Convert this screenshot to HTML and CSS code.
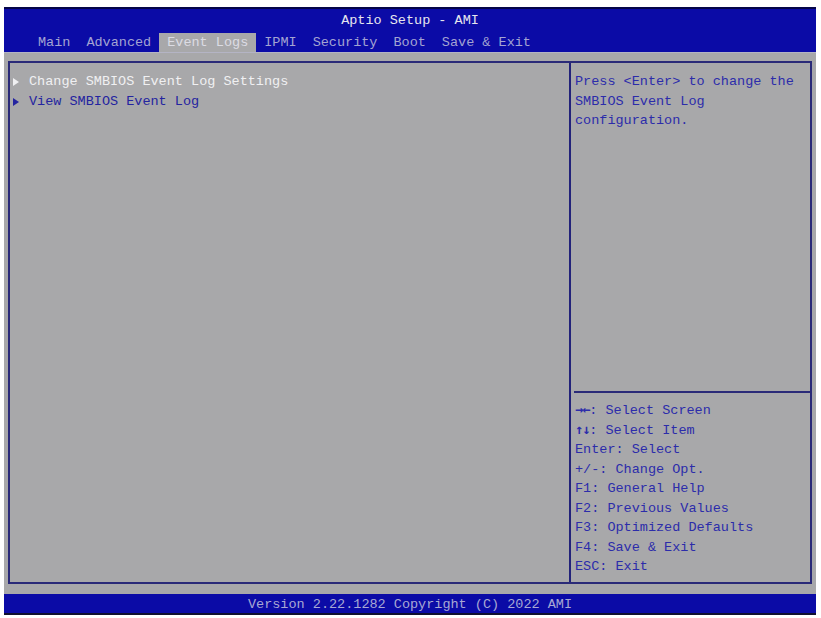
FILE: index.html
```html
<!DOCTYPE html>
<html lang="en">
<head>
    <meta charset="UTF-8">
    <meta name="viewport" content="width=device-width, initial-scale=1.0">
    <title>Aptio Setup - AMI</title>
    <link rel="stylesheet" href="styles.css">
</head>
<body>
    <div class="screen">
        <!-- Title and tab bar -->
        <div class="header">
            <div class="title">Aptio Setup - AMI</div>
            <div class="tabs">
                <span class="tab">Main</span>
                <span class="tab">Advanced</span>
                <span class="tab active">Event Logs</span>
                <span class="tab">IPMI</span>
                <span class="tab">Security</span>
                <span class="tab">Boot</span>
                <span class="tab">Save &amp; Exit</span>
            </div>
        </div>

        <div class="main">
            <div class="frame">
                <div class="menu">
                    <div class="item selected"><span class="arrow"></span>Change SMBIOS Event Log Settings</div>
                    <div class="item"><span class="arrow"></span>View SMBIOS Event Log</div>
                </div>

                <div class="side">
                    <div class="help-text">
                        Press &lt;Enter&gt; to change the<br>
                        SMBIOS Event Log<br>
                        configuration.
                    </div>
                    <div class="divider"></div>
                    <div class="keys">
                        <div class="key"><span class="key-arrows">&rarr;&larr;</span>: Select Screen</div>
                        <div class="key"><span class="key-arrows">&uarr;&darr;</span>: Select Item</div>
                        <div class="key">Enter: Select</div>
                        <div class="key">+/-: Change Opt.</div>
                        <div class="key">F1: General Help</div>
                        <div class="key">F2: Previous Values</div>
                        <div class="key">F3: Optimized Defaults</div>
                        <div class="key">F4: Save &amp; Exit</div>
                        <div class="key">ESC: Exit</div>
                    </div>
                </div>
            </div>
        </div>

        <div class="footer">Version 2.22.1282 Copyright (C) 2022 AMI</div>
    </div>
</body>
</html>
```

FILE: styles.css
```css
body {
    margin: 0;
    padding: 0;
    background-color: #fff;
    font-family: "Liberation Mono", "DejaVu Sans Mono", monospace;
    font-size: 13.5px;
}

.screen {
    width: 812px;
    height: 608px;
    margin: 7px 0 0 4px;
    display: flex;
    flex-direction: column;
    background-color: #a8a8aa;
}

.header {
    height: 45px;
    background-color: #0b0ba6;
    border-top: 2px solid #06064a;
    box-sizing: border-box;
}

.title {
    height: 24px;
    line-height: 24px;
    text-align: center;
    color: #e6e6ee;
}

.tabs {
    display: flex;
    padding-left: 26px;
    height: 19px;
}

.tab {
    padding: 0 8px;
    line-height: 19px;
    color: #a4a4d2;
}

.tab.active {
    background-color: #a8a8aa;
    color: #dcdce4;
}

.main {
    flex: 1;
    padding: 8px 4px 10px 4px;
    border-top: 1px solid #b4b4c4;
    display: flex;
}

.frame {
    flex: 1;
    display: flex;
    border: 2px solid #2a2a78;
}

.menu {
    width: 557px;
    padding: 9px 0 0 2px;
}

.item {
    line-height: 20px;
    color: #2424a0;
    display: flex;
    align-items: center;
}

.item.selected {
    color: #f0f0f2;
}

.arrow {
    width: 0;
    height: 0;
    border-top: 4px solid transparent;
    border-bottom: 4px solid transparent;
    border-left: 6px solid currentColor;
    margin: 0 10px 0 1px;
}

.side {
    flex: 1;
    display: flex;
    flex-direction: column;
    border-left: 2px solid #22227a;
    color: #2c2caa;
}

.help-text {
    height: 319px;
    padding: 9px 0 0 4px;
    line-height: 19.5px;
}

.divider {
    height: 2px;
    margin-left: 3px;
    background-color: #2a2a78;
}

.keys {
    padding: 8px 0 0 4px;
}

.key {
    height: 19.5px;
    line-height: 19.5px;
    overflow: hidden;
}

.key-arrows {
    font-family: "DejaVu Sans Mono", monospace;
    font-weight: bold;
    letter-spacing: -1px;
    line-height: 1;
}

.footer {
    height: 21px;
    line-height: 21px;
    text-align: center;
    color: #a8a8d4;
    background-color: #0b0ba6;
    box-shadow: inset 0 -2px 0 #101030;
}
```
